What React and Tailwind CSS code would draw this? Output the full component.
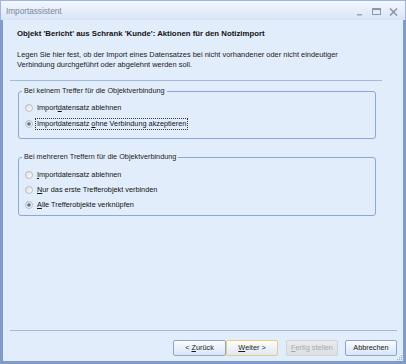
import React from 'react'

const FONT = { fontFamily: '"Liberation Sans", Arial, sans-serif' }

function Radio({ checked }) {
  return (
    <svg width="8" height="8" viewBox="0 0 8 8" className="shrink-0">
      <defs>
        <linearGradient id={checked ? 'rg1' : 'rg0'} x1="0" y1="0" x2="1" y2="1">
          <stop offset="0" stopColor="#dcdcdc" />
          <stop offset="1" stopColor="#ffffff" />
        </linearGradient>
      </defs>
      <circle cx="4" cy="4" r="3.5" fill={`url(#${checked ? 'rg1' : 'rg0'})`} stroke="#a9b1bc" strokeWidth="0.8" />
      {checked && <circle cx="4" cy="4" r="1.8" fill="#51739f" />}
    </svg>
  )
}

function Option({ checked, focus, children, h }) {
  return (
    <div className={`flex items-center gap-[4px] pl-[6px] ${h}`}>
      <Radio checked={checked} />
      <span className={`leading-[10px] ${focus ? 'outline outline-1 outline-dotted outline-[#333] outline-offset-[0px] px-[1px] -ml-[1px]' : ''}`}>
        {children}
      </span>
    </div>
  )
}

function Btn({ children, w, variant }) {
  const styles = {
    normal: 'border-[#8ea6cc] bg-gradient-to-b from-[#fbfcfe] to-[#d9e5f5] text-[#1b1b1b]',
    def: 'border-[#e4cf7e] bg-gradient-to-b from-[#fdfdf8] to-[#dfe8f6] text-[#1b1b1b]',
    off: 'border-[#cfd3d8] bg-gradient-to-b from-[#e8eaed] to-[#dcdfe3] text-[#a6aab0]',
  }
  return (
    <div className={`${w} h-[16px] flex items-center justify-center border rounded-[2px] text-[7.3px] whitespace-pre ${styles[variant]}`}>
      {children}
    </div>
  )
}

export default function App() {
  return (
    <div className="w-[406px] h-[364px] flex flex-col bg-[#7f9cc9] text-[#111]" style={FONT}>
      {/* title bar */}
      <div className="h-[20px] shrink-0 flex items-center justify-between bg-gradient-to-b from-[#f3f7fd] via-[#e5eefb] to-[#d7e4f6] border-t border-x border-[#9fb6da]">
        <span className="pl-[5px] pt-[3px] text-[8.2px] text-[#7b8698]">Importassistent</span>
        <div className="flex items-center gap-[8px] pr-[7px] pt-[2px]">
          <svg width="8" height="8" viewBox="0 0 8 8"><rect x="1" y="6" width="5" height="1.5" fill="#9aa5b5" /></svg>
          <svg width="9" height="8" viewBox="0 0 9 8"><rect x="0.5" y="0.5" width="8" height="6" fill="none" stroke="#8c98aa" /><rect x="0.5" y="0.5" width="8" height="1.6" fill="#8c98aa" /></svg>
          <svg width="9" height="8" viewBox="0 0 9 8"><path d="M1 0.5 L8 7.5 M8 0.5 L1 7.5" stroke="#8c98aa" strokeWidth="1.6" /></svg>
        </div>
      </div>

      {/* body */}
      <div className="relative flex-1 flex flex-col bg-[#e2edfc] ml-[3px] mr-[3px] mb-[3px]">
        <div className="pl-[14px] mt-[9px] font-bold text-[7.8px] leading-[10px]">
          Objekt 'Bericht' aus Schrank 'Kunde': Aktionen für den Notizimport
        </div>
        <div className="pl-[14px] mt-[11px] text-[7.45px] leading-[10px] text-[#1a1a1a]">
          Legen Sie hier fest, ob der Import eines Datensatzes bei nicht vorhandener oder nicht eindeutiger<br />
          Verbindung durchgeführt oder abgelehnt werden soll.
        </div>
        <div className="ml-[7px] w-[372px] h-px mt-[10px] bg-[#a3b8da]" />

        <fieldset className="ml-[15px] w-[358px] mt-[5px] border border-[#8aa7d6] rounded-[3px] pb-[6px] text-[7.3px]">
          <legend className="ml-[3px] px-[2px] leading-[10px] text-[#222]">Bei keinem Treffer für die Objektverbindung</legend>
          <div className="mt-[4px]">
            <Option h="h-[16px]">Import<u>d</u>atensatz ablehnen</Option>
            <Option h="h-[16px]" checked focus>Importdatensatz <u>o</u>hne Verbindung akzeptieren</Option>
          </div>
        </fieldset>

        <fieldset className="ml-[15px] w-[358px] mt-[13px] border border-[#8aa7d6] rounded-[3px] pb-[3px] text-[7.3px]">
          <legend className="ml-[3px] px-[2px] leading-[10px] text-[#222]">Bei mehreren Treffern für die Objektverbindung</legend>
          <div className="mt-[5px]">
            <Option h="h-[15px]"><u>I</u>mportdatensatz ablehnen</Option>
            <Option h="h-[15px]"><u>N</u>ur das erste Trefferobjekt verbinden</Option>
            <Option h="h-[15px]" checked><u>A</u>lle Trefferobjekte verknüpfen</Option>
          </div>
        </fieldset>

        <div className="mt-auto ml-[7px] mr-[6px] h-px bg-[#a3b8da]" />
        <div className="flex justify-end mt-[9px] mr-[6px] mb-[5px]">
          <Btn w="w-[53px]" variant="normal">{'< '}<u>Z</u>urück</Btn>
          <Btn w="w-[52px]" variant="def"><u>W</u>eiter{' >'}</Btn>
          <div className="w-[8px]" />
          <Btn w="w-[52px]" variant="off"><u>F</u>ertig stellen</Btn>
          <div className="w-[7px]" />
          <Btn w="w-[52px]" variant="normal">Abbrechen</Btn>
        </div>

        {/* size grip */}
        <svg className="absolute right-0 bottom-0" width="7" height="7" viewBox="0 0 7 7">
          {[[5, 1], [3, 3], [5, 3], [1, 5], [3, 5], [5, 5]].map(([x, y]) => (
            <rect key={`${x}-${y}`} x={x} y={y} width="1.2" height="1.2" fill="#9db1d2" />
          ))}
        </svg>
      </div>
    </div>
  )
}
